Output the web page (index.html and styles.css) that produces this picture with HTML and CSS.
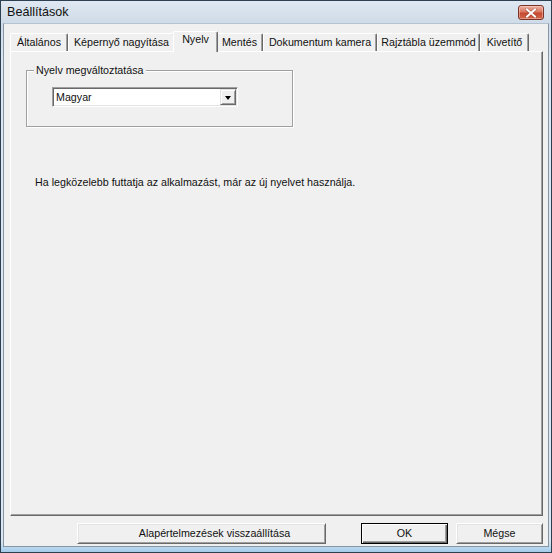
FILE: index.html
```html
<!DOCTYPE html>
<html lang="hu">
<head>
<meta charset="utf-8">
<title>Beállítások</title>
<link rel="stylesheet" href="styles.css">
</head>
<body>
<div class="window">
  <div class="titlebar">
    <span class="title">Beállítások</span>
    <div class="close">
      <svg width="12" height="10" viewBox="0 0 12 10">
        <path d="M2 1.5 L10 8.5 M10 1.5 L2 8.5" stroke="#5a1a10" stroke-width="3.2" stroke-linecap="square" opacity="0.35"/>
        <path d="M2 1.5 L10 8.5 M10 1.5 L2 8.5" stroke="#ffffff" stroke-width="2" stroke-linecap="square"/>
      </svg>
    </div>
  </div>
  <div class="client">
    <div class="tabs">
      <div class="tab w1">Általános</div>
      <div class="tab w2">Képernyő nagyítása</div>
      <div class="tab w3 active">Nyelv</div>
      <div class="tab w4">Mentés</div>
      <div class="tab w5">Dokumentum kamera</div>
      <div class="tab w6">Rajztábla üzemmód</div>
      <div class="tab w7">Kivetítő</div>
    </div>
    <div class="panel">
      <div class="group">
        <div class="group-title">Nyelv megváltoztatása</div>
        <div class="combo">
          <span class="combo-text">Magyar</span>
          <span class="combo-btn"><span class="arrow"></span></span>
        </div>
      </div>
      <p class="note">Ha legközelebb futtatja az alkalmazást, már az új nyelvet használja.</p>
    </div>
    <div class="buttons">
      <div class="btn reset">Alapértelmezések visszaállítása</div>
      <div class="btn ok">OK</div>
      <div class="btn cancel">Mégse</div>
    </div>
  </div>
</div>
</body>
</html>
```
FILE: styles.css
```css
html, body {
  margin: 0;
  padding: 0;
  background: #f0f0f0;
}

body {
  font-family: "Liberation Sans", Arial, sans-serif;
  font-size: 10.7px;
  color: #111;
}

.window {
  width: 552px;
  height: 553px;
  box-sizing: border-box;
  border: 1px solid #2c4052;
  background: linear-gradient(to bottom, #dfe8f2 0px, #cfdbe8 22px, #dbe6f0 60px, #dbe6f0 540px, #b6d6ee 547px, #a5cbe8 551px);
  display: flex;
  flex-direction: column;
}

.titlebar {
  height: 22px;
  display: flex;
  align-items: flex-start;
  padding-left: 6px;
}

.title {
  font-size: 12.6px;
  line-height: 15px;
  margin-top: 4px;
  color: #111;
}

.close {
  margin-left: auto;
  margin-right: 7px;
  margin-top: 4px;
  width: 26px;
  height: 15px;
  box-sizing: border-box;
  border: 1px solid #7a3428;
  border-radius: 3px;
  background: linear-gradient(to bottom, #eeb2a2 0%, #d9775f 45%, #c54a30 55%, #d2674b 100%);
  display: flex;
  align-items: center;
  justify-content: center;
  box-shadow: inset 0 0 0 1px rgba(255, 220, 210, 0.45);
}

.close svg {
  display: block;
}

.client {
  height: 524px;
  box-sizing: border-box;
  margin: 0 2px;
  border: 1px solid #8796a5;
  border-top-color: #b4c2d0;
  background: #f0f0f0;
  padding: 7px 5px 0 6px;
  display: flex;
  flex-direction: column;
}

.tabs {
  height: 20px;
  display: flex;
  align-items: flex-end;
}

.tab {
  height: 18px;
  box-sizing: border-box;
  border-left: 1px solid #ffffff;
  border-top: 1px solid #ffffff;
  border-right: 1px solid #696969;
  border-radius: 2px 2px 0 0;
  box-shadow: inset -1px 0 0 #a0a0a0;
  padding-top: 2px;
  line-height: 13px;
  text-align: center;
  white-space: nowrap;
  background: #f0f0f0;
}

.w1 { width: 58px; }
.w2 { width: 107px; }
.w3 { width: 41px; }
.w4 { width: 47px; }
.w5 { width: 114px; }
.w6 { width: 103px; }
.w7 { width: 49px; }

.tab.active {
  width: 45px;
  height: 21px;
  margin: 0 -2px -1px -2px;
  padding-top: 1px;
  position: relative;
  z-index: 1;
}

.panel {
  height: 465px;
  box-sizing: border-box;
  border-left: 1px solid #ffffff;
  border-top: 1px solid #ffffff;
  border-right: 1px solid #696969;
  border-bottom: 1px solid #696969;
  box-shadow: inset -1px -1px 0 #a0a0a0;
  padding: 18px 0 0 15px;
  display: flex;
  flex-direction: column;
  align-items: flex-start;
}

.group {
  width: 267px;
  box-sizing: border-box;
  border: 1px solid #a0a0a0;
  box-shadow: inset 1px 1px 0 #ffffff, 1px 1px 0 #ffffff;
  padding: 0 0 19px 25px;
  display: flex;
  flex-direction: column;
  align-items: flex-start;
}

.group-title {
  line-height: 13px;
  margin: -7px 0 0 -18px;
  padding: 0 2px;
  background: #f0f0f0;
}

.combo {
  margin-top: 10px;
  width: 186px;
  height: 20px;
  box-sizing: border-box;
  border: 1px solid;
  border-color: #a0a0a0 #ffffff #ffffff #a0a0a0;
  box-shadow: inset 1px 1px 0 #696969, inset -1px -1px 0 #e3e3e3;
  background: #ffffff;
  display: flex;
  align-items: stretch;
  padding: 1px;
}

.combo-text {
  flex: 1;
  line-height: 16px;
  padding-left: 2px;
}

.combo-btn {
  width: 16px;
  box-sizing: border-box;
  border: 1px solid;
  border-color: #e3e3e3 #696969 #696969 #e3e3e3;
  box-shadow: inset 1px 1px 0 #ffffff, inset -1px -1px 0 #a0a0a0;
  background: #f0f0f0;
  display: flex;
  align-items: center;
  justify-content: center;
}

.arrow {
  width: 0;
  height: 0;
  border-left: 3.5px solid transparent;
  border-right: 3.5px solid transparent;
  border-top: 4px solid #000;
  margin-top: 1px;
}

.note {
  margin: 49px 0 0 9px;
  line-height: 13px;
}

.buttons {
  margin-top: 7px;
  display: flex;
  justify-content: flex-end;
}

.btn {
  height: 21px;
  width: 87px;
  box-sizing: border-box;
  border: 1px solid;
  border-color: #ffffff #696969 #696969 #ffffff;
  box-shadow: inset 1px 1px 0 #e3e3e3, inset -1px -1px 0 #a0a0a0;
  background: #f0f0f0;
  text-align: center;
  line-height: 19px;
  white-space: nowrap;
}

.btn.reset {
  width: 249px;
  padding-left: 26px;
  margin-right: 35px;
}

.btn.ok {
  border: 1px solid #000;
  box-shadow: inset 1px 1px 0 #ffffff, inset -1px -1px 0 #696969, inset -2px -2px 0 #a0a0a0;
  margin-right: 8px;
}
```
